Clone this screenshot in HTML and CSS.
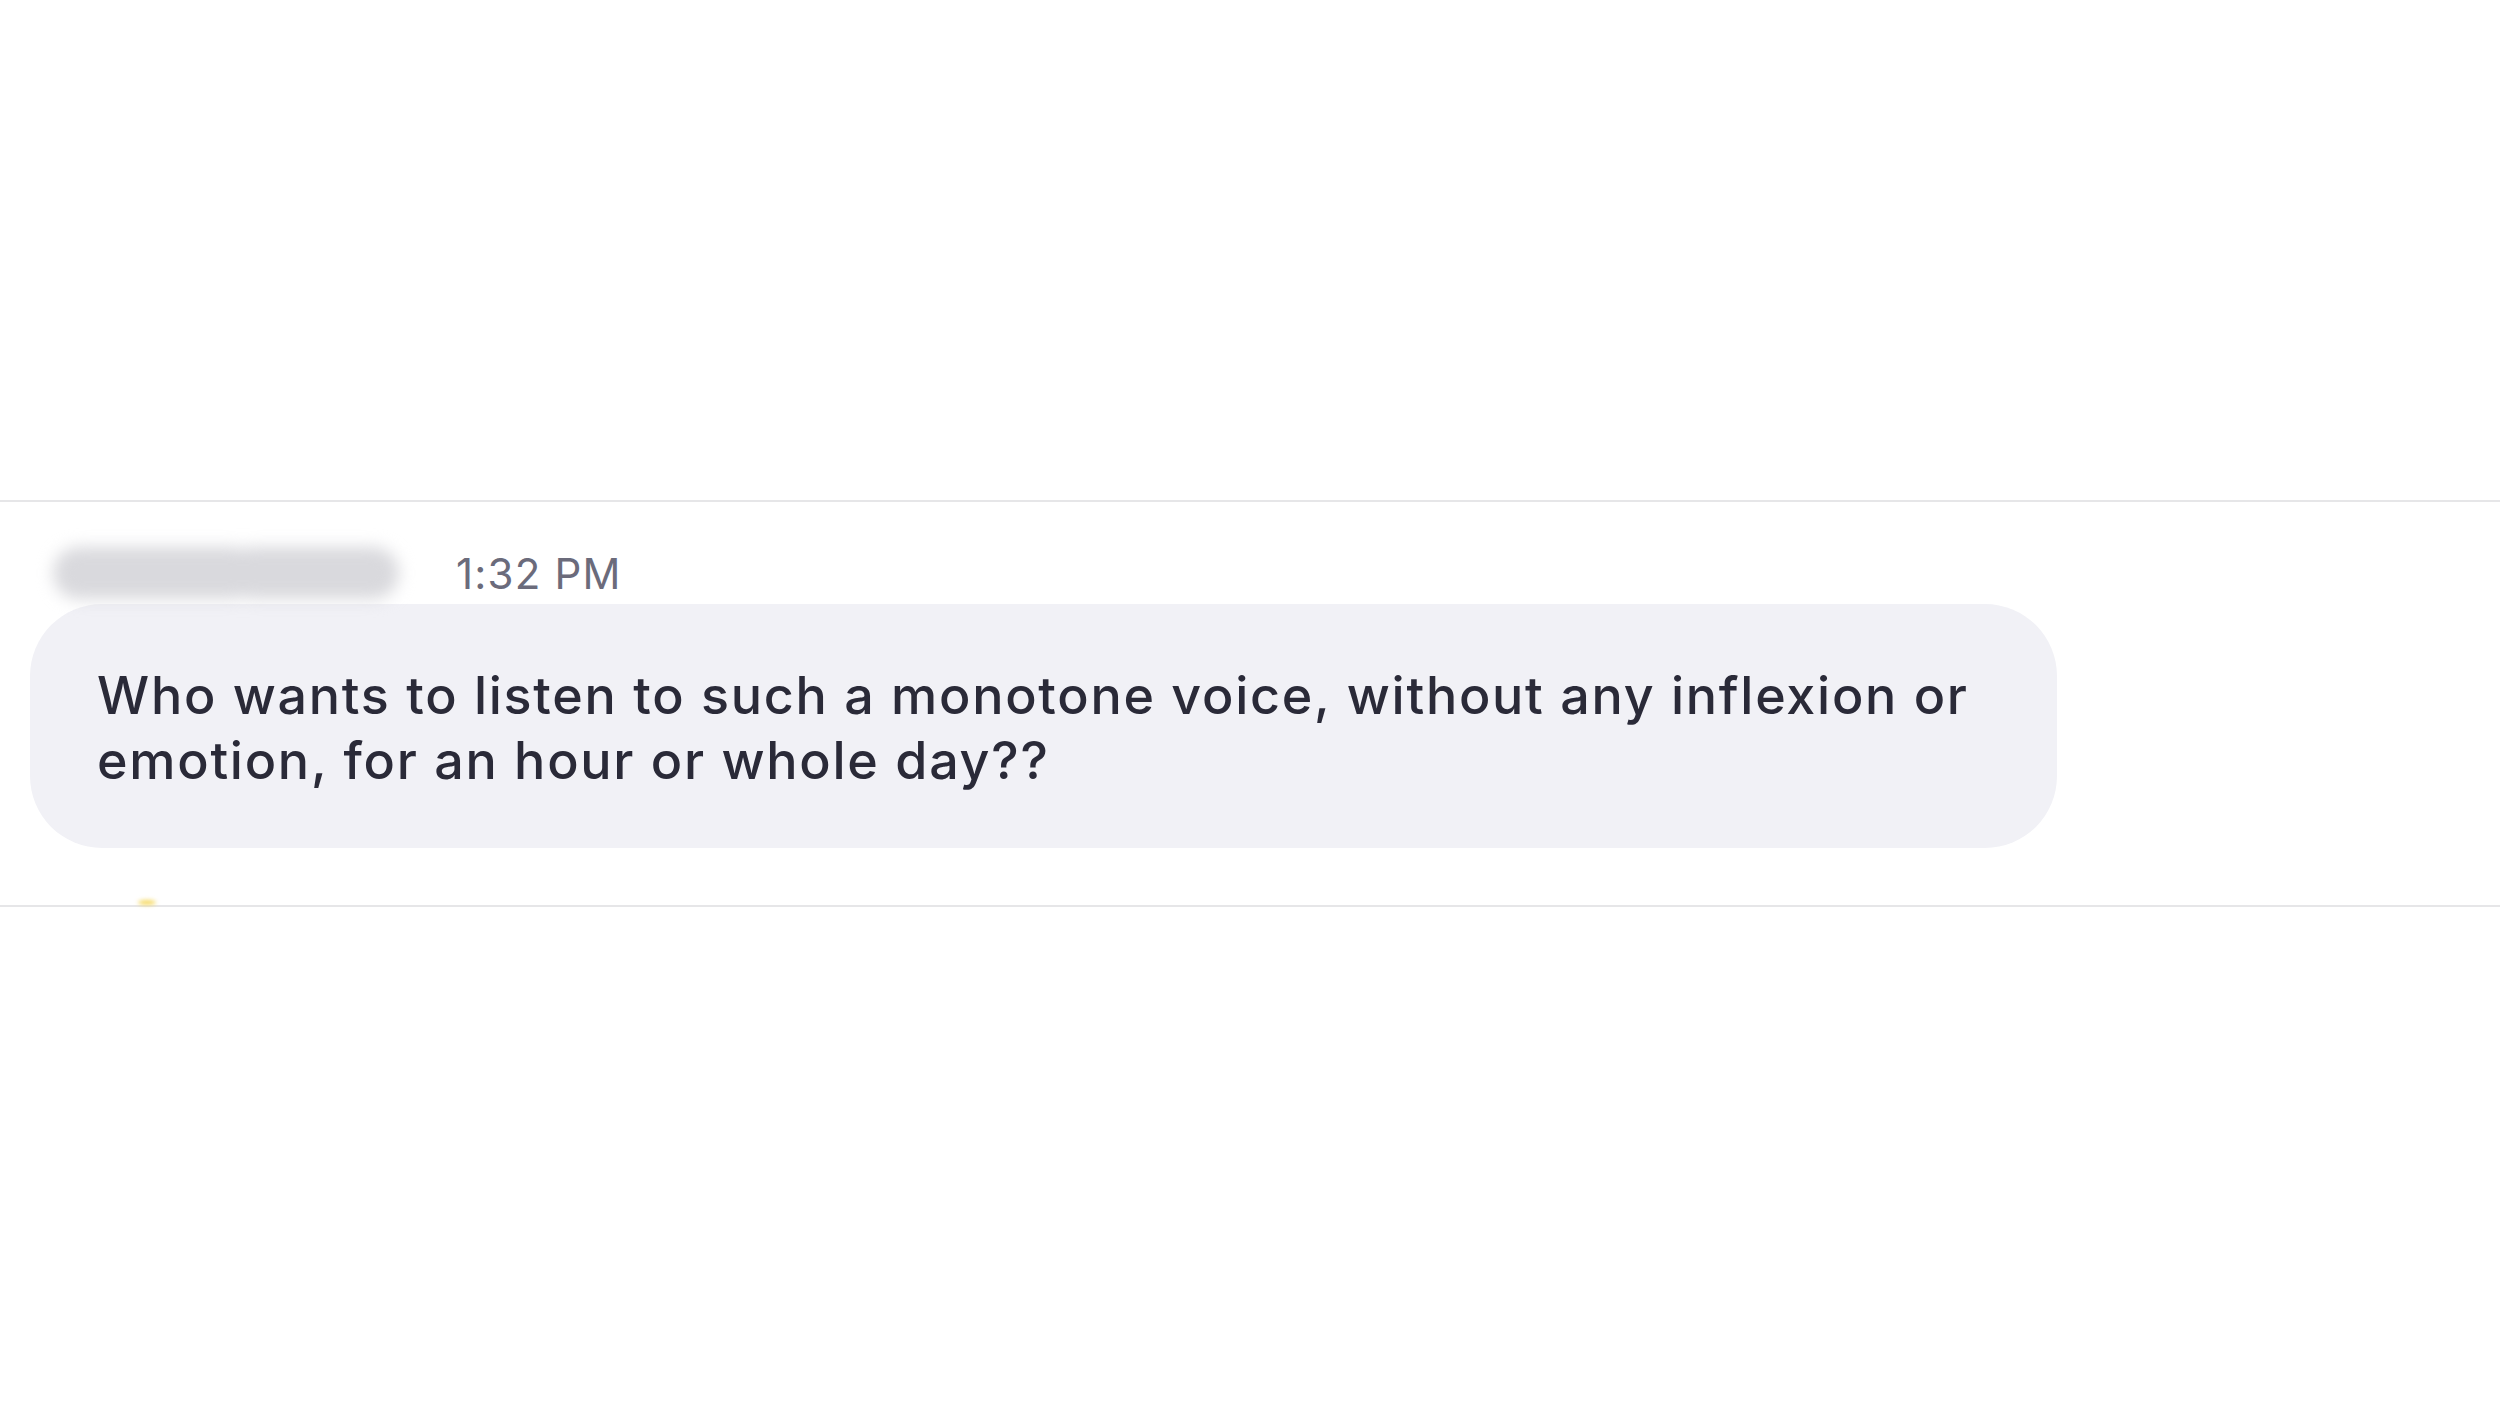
FILE: index.html
```html
<!DOCTYPE html>
<html lang="en">
<head>
<meta charset="utf-8">
<title>Chat message</title>
<link rel="stylesheet" href="styles.css">
</head>
<body>
<div class="page">
  <div class="spacer"></div>
  <section class="message">
    <div class="meta">
      <div class="name-blur" aria-label="hidden name"><span class="seg seg-a"></span><span class="seg seg-b"></span></div>
      <span class="time">1:32 PM</span>
    </div>
    <div class="bubble">
      <p class="text">Who wants to listen to such a monotone voice, without any inflexion or emotion, for an hour or whole day??</p>
    </div>
    <div class="footer"><span class="reaction-dot"></span></div>
  </section>
</div>
</body>
</html>
```

FILE: styles.css
```css
html, body {
  margin: 0;
  padding: 0;
  background: #ffffff;
}
.page {
  width: 2500px;
  height: 1406px;
  overflow: hidden;
  font-family: "Inter", "Liberation Sans", sans-serif;
}
.spacer {
  height: 500px;
}
.message {
  border-top: 2px solid #e6e6e8;
  border-bottom: 2px solid #e6e6e8;
}
.meta {
  display: flex;
  align-items: center;
  height: 56px;
  margin-top: 43px;
  padding-left: 53px;
}
.name-blur {
  display: flex;
  width: 346px;
  height: 52px;
  filter: blur(8px);
}
.seg {
  display: block;
  height: 100%;
  background: #d9d9dd;
  border-radius: 26px;
}
.seg-a { width: 190px; border-radius: 26px 6px 6px 26px; }
.seg-b { width: 156px; border-radius: 6px 26px 26px 6px; }
.time {
  margin-left: 57px;
  font-size: 42px;
  color: #6b6b7b;
  font-weight: 400;
  letter-spacing: 1.2px;
}
.bubble {
  box-sizing: border-box;
  width: 2027px;
  margin: 3px 0 0 30px;
  padding: 59px 67px 55px;
  background: #f1f1f6;
  border-radius: 72px;
}
.text {
  margin: 0;
  font-size: 52px;
  line-height: 65px;
  color: #2a2a38;
  font-weight: 500;
  letter-spacing: 1.75px;
}
.footer {
  height: 57px;
  position: relative;
}
.reaction-dot {
  position: absolute;
  left: 138px;
  bottom: 0;
  width: 18px;
  height: 5px;
  background: #f5d860;
  border-radius: 50%;
  filter: blur(2px);
}
```
